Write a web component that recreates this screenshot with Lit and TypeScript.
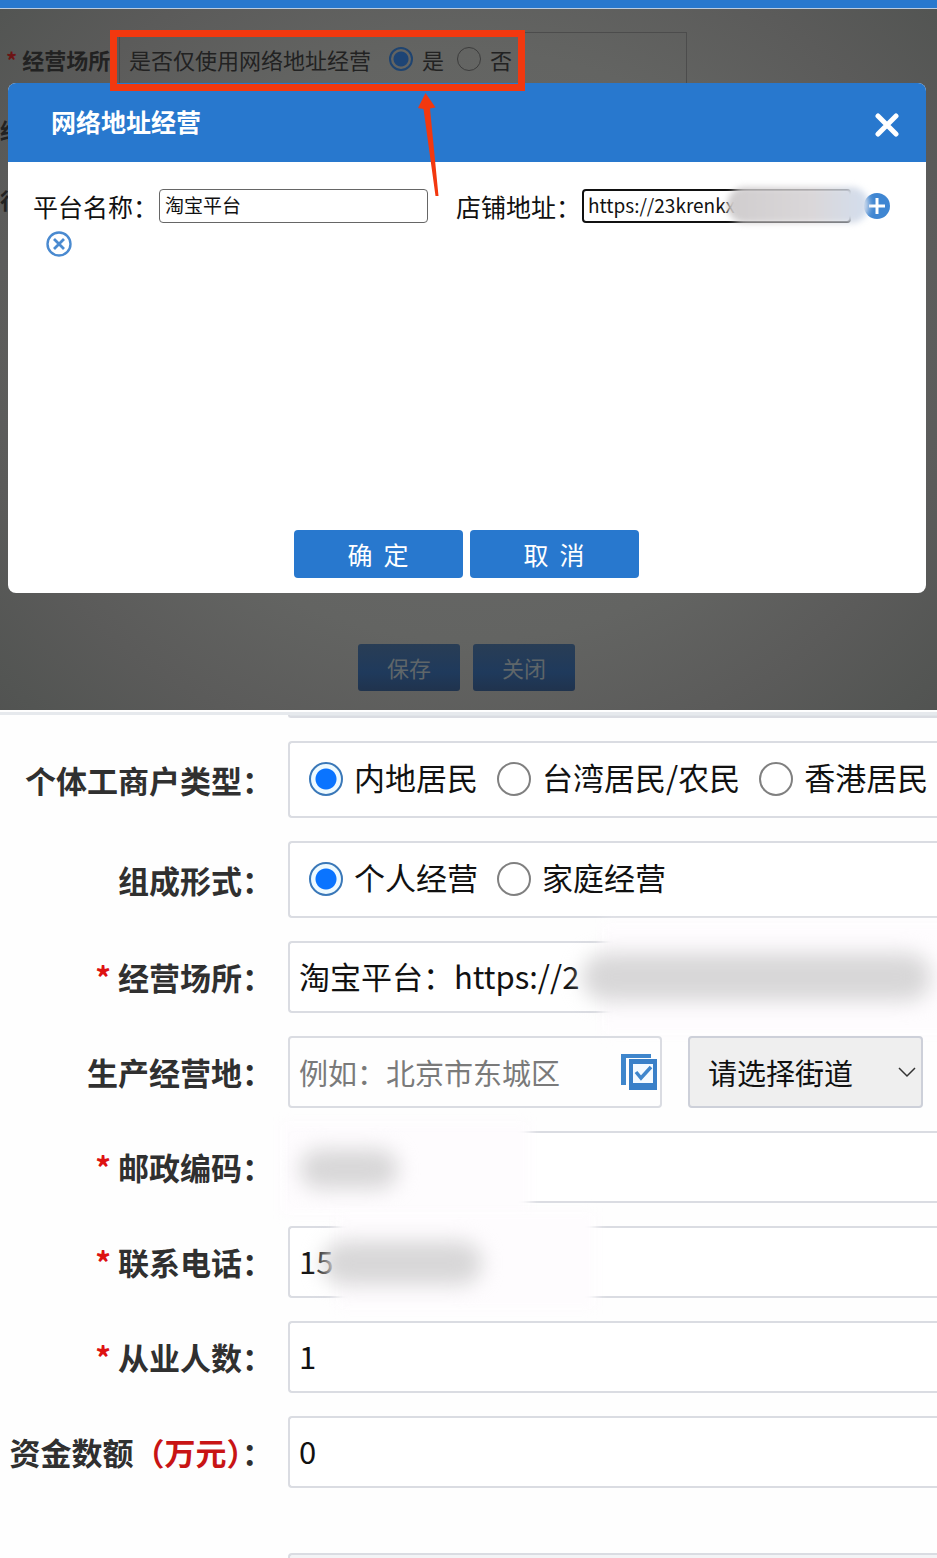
import { LitElement, html, css } from "lit";
import { customElement } from "lit/decorators.js";

const base = css`
  :host {
    display: block;
    font-family: "Noto Sans CJK SC", "Noto Sans", sans-serif;
  }
  * {
    box-sizing: border-box;
  }
  input,
  select,
  button {
    font-family: inherit;
    margin: 0;
  }
  button {
    cursor: pointer;
    border: 0;
    padding: 0;
  }
`;

@customElement("address-dialog")
class AddressDialog extends LitElement {
  static styles = [
    base,
    css`
      .dialog {
        display: flex;
        flex-direction: column;
        min-height: 510px;
        border-radius: 8px;
        overflow: hidden;
        background: #fff;
      }
      .head {
        display: flex;
        align-items: center;
        justify-content: space-between;
        height: 79px;
        padding: 0 27px 0 43px;
        background: #2878ce;
        color: #fff;
      }
      .title {
        margin: 0;
        padding-bottom: 4px;
        font-size: 25px;
        line-height: 36px;
        font-weight: 700;
      }
      .close {
        display: flex;
        background: none;
        padding-top: 4px;
      }
      .body {
        flex: 1;
        padding: 27px 24px 0 25px;
      }
      .fields {
        display: flex;
        align-items: center;
      }
      .field {
        display: flex;
        align-items: center;
        flex: 0 1 395px;
        margin-right: 28px;
        position: relative;
      }
      .field.last {
        margin-right: 13px;
      }
      .field label {
        font-size: 25px;
        line-height: 34px;
        white-space: nowrap;
        color: #111;
        padding-right: 1px;
      }
      .field input {
        flex: 1;
        min-width: 0;
        height: 34px;
        padding: 0 5px 4px;
        border: 1px solid #666;
        border-radius: 4px;
        font-size: 19px;
        color: #111;
        background: #fff;
        outline: 0;
      }
      .field.last input {
        border: 2px solid #111;
        padding: 0 4px 3px;
      }
      .icon {
        display: flex;
        background: none;
      }
      .second {
        display: flex;
        padding: 8px 0 0 13px;
      }
      .smudge {
        position: absolute;
        right: -18px;
        top: -2px;
        width: 142px;
        height: 36px;
        border-radius: 18px;
        background: linear-gradient(90deg, #d0cdce 0, #dad7d9 60%, #d3deee 100%);
        filter: blur(3px);
      }
      .actions {
        display: flex;
        justify-content: center;
        gap: 7px;
        padding: 0 2px 15px 0;
      }
      .actions button {
        width: 169px;
        height: 48px;
        border-radius: 4px;
        background: #2878ce;
        color: #fff;
        font-size: 25px;
        line-height: 36px;
      }
    `,
  ];

  render() {
    return html`
      <section class="dialog" role="dialog" aria-labelledby="title">
        <header class="head">
          <h2 class="title" id="title">网络地址经营</h2>
          <button class="close" aria-label="关闭窗口">
            <svg width="24" height="24" viewBox="0 0 24 24">
              <path d="M3 3L21 21M21 3L3 21" stroke="#fff" stroke-width="5" stroke-linecap="round" />
            </svg>
          </button>
        </header>
        <div class="body">
          <div class="fields">
            <div class="field">
              <label for="platform">平台名称：</label>
              <input id="platform" type="text" value="淘宝平台" />
            </div>
            <div class="field last">
              <label for="shop">店铺地址：</label>
              <input id="shop" type="text" value="https://23krenkx" />
              <span class="smudge" aria-hidden="true"></span>
            </div>
            <button class="icon" aria-label="添加">
              <svg width="26" height="26" viewBox="0 0 26 26">
                <circle cx="13" cy="13" r="13" fill="#3f86d2" />
                <path d="M13 5V21M5 13H21" stroke="#fff" stroke-width="3" />
              </svg>
            </button>
          </div>
          <div class="second">
            <button class="icon" aria-label="删除">
              <svg width="26" height="26" viewBox="0 0 26 26" fill="none" stroke="#4a8ad0">
                <circle cx="13" cy="13" r="11.5" stroke-width="2.4" />
                <path d="M8 8L18 18M18 8L8 18" stroke-width="2.8" />
              </svg>
            </button>
          </div>
        </div>
        <footer class="actions">
          <button>确&nbsp;&nbsp;定</button>
          <button>取&nbsp;&nbsp;消</button>
        </footer>
      </section>
    `;
  }
}

@customElement("dimmed-stage")
class DimmedStage extends LitElement {
  static styles = [
    base,
    css`
      .bar {
        height: 9px;
        background: #2878ce;
        border-bottom: 1px solid #b9cbe0;
      }
      .stage {
        display: grid;
        position: relative;
        overflow: hidden;
        background: radial-gradient(
          ellipse 62% 70% at 50% 48%,
          #6a6a6a 0,
          #636462 60%,
          #5b5b5a 85%,
          #535553 105%,
          #4d4d4d 125%
        );
      }
      .under,
      address-dialog {
        grid-area: 1 / 1;
      }
      address-dialog {
        margin: 74px 11px 117px 8px;
        position: relative;
      }
      .under {
        display: flex;
        flex-direction: column;
        padding: 23px 0 19px;
        color: #222;
        font-size: 22px;
        line-height: 34px;
      }
      .row {
        display: flex;
        height: 54px;
        align-items: center;
        margin-bottom: 16px;
      }
      .name {
        width: 119px;
        padding-left: 6px;
        white-space: nowrap;
        font-weight: 700;
      }
      .name.cut {
        padding-left: 0;
      }
      .star {
        color: #6c1414;
      }
      .choices {
        display: flex;
        align-items: center;
        width: 568px;
        height: 54px;
        padding-left: 9px;
        border: 1px solid #4c4c4c;
      }
      .choices label {
        margin-right: 13px;
      }
      .choices span {
        margin-right: 18px;
      }
      .choices input {
        appearance: none;
        width: 24px;
        height: 24px;
        margin: 0 9px 0 0;
        border: 1px solid #3c3c3c;
        border-radius: 50%;
      }
      .choices input:checked {
        border: 2px solid #1f4470;
        background: radial-gradient(circle, #1d4475 0 7px, transparent 8px);
      }
      .actions {
        display: flex;
        justify-content: center;
        gap: 13px;
        margin-top: auto;
        padding-right: 4px;
      }
      .actions button {
        width: 102px;
        height: 47px;
        padding-bottom: 2px;
        border-radius: 3px;
        background: linear-gradient(#293d55, #1f3a5c 60%, #20334d);
        color: #5f6669;
        font-size: 22px;
        line-height: 34px;
      }
      .mark {
        position: absolute;
        left: 110px;
        top: 21px;
      }
    `,
  ];

  render() {
    return html`
      <div class="bar"></div>
      <div class="stage">
        <div class="under">
          <div class="row">
            <div class="name"><span class="star">*</span> 经营场所</div>
            <div class="choices" role="radiogroup" aria-labelledby="only">
              <span id="only">是否仅使用网络地址经营</span>
              <input type="radio" name="net" id="yes" checked /><label for="yes">是</label>
              <input type="radio" name="net" id="no" /><label for="no">否</label>
            </div>
          </div>
          <div class="row"><div class="name cut">经</div></div>
          <div class="row"><div class="name cut">行</div></div>
          <div class="actions">
            <button>保存</button>
            <button>关闭</button>
          </div>
        </div>
        <address-dialog></address-dialog>
        <svg class="mark" width="416" height="170" viewBox="0 0 416 170" aria-hidden="true">
          <rect x="3.5" y="3.5" width="408" height="54" fill="none" stroke="#f2380f" stroke-width="7" />
          <path d="M315.500 63L308 78L313.500 79L325.500 166H328.500L320 78.500L325.500 77.500Z" fill="#f2380f" />
        </svg>
      </div>
    `;
  }
}

@customElement("detail-form")
class DetailForm extends LitElement {
  static styles = [
    base,
    css`
      :host {
        margin-top: 2px;
        border-top: 3px solid #e6e9ed;
        overflow: hidden;
      }
      form {
        display: grid;
        gap: 23px;
      }
      .row {
        display: grid;
        grid-template-columns: 273px minmax(0, 1fr);
        column-gap: 15px;
        align-items: center;
        position: relative;
      }
      .name {
        display: flex;
        justify-content: flex-end;
        font-size: 31px;
        line-height: 44px;
        font-weight: 700;
        color: #303030;
        white-space: nowrap;
      }
      .star {
        color: #dd1111;
        margin-right: 7px;
      }
      .unit {
        color: #c81414;
      }
      .box {
        width: 100%;
        height: 72px;
        border: 2px solid #dadce2;
        border-right: 0;
        border-radius: 4px 0 0 4px;
        background: #fff;
        color: #111;
        font-size: 31px;
        padding: 0 9px 3px;
        outline: 0;
      }
      .radios {
        display: flex;
        align-items: center;
        height: 77px;
        padding: 0 0 1px 19px;
        line-height: 44px;
        white-space: nowrap;
      }
      .radios input {
        appearance: none;
        flex: none;
        width: 34px;
        height: 34px;
        margin: 0 11px 0 0;
        border: 2px solid #808080;
        border-radius: 50%;
      }
      .radios input:checked {
        border-color: #3a78b8;
        background: radial-gradient(circle, #0a74ff 0 10px, #eefaff 11px);
      }
      .radios label {
        margin-right: 19px;
        padding-bottom: 4px;
      }
      .above {
        height: 3px;
        border-top: 0;
        border-radius: 0 0 0 4px;
        background: #e0e4e8;
        padding: 0;
      }
      .first {
        align-items: start;
      }
      .pair {
        display: flex;
        gap: 26px;
        padding-right: 14px;
      }
      .picker {
        display: flex;
        align-items: center;
        flex: 374 1 374px;
        min-width: 0;
        height: 72px;
        border: 2px solid #dadce2;
        border-radius: 4px;
        padding: 0 2px 0 9px;
      }
      .picker input {
        flex: 1;
        min-width: 0;
        border: 0;
        padding: 0;
        height: 60px;
        outline: 0;
        font-size: 29px;
        background: none;
      }
      .picker input::placeholder {
        color: #7a7a7a;
      }
      .picker button {
        display: flex;
        background: none;
      }
      .street {
        flex: 235 1 235px;
        min-width: 0;
        position: relative;
      }
      .street select {
        appearance: none;
        width: 100%;
        height: 72px;
        border: 2px solid #cdd0d9;
        border-radius: 4px;
        background: #efefef;
        color: #111;
        font-size: 29px;
        padding: 0 0 0 18px;
      }
      .street svg {
        position: absolute;
        right: 7px;
        top: 30px;
        pointer-events: none;
      }
      .next {
        margin-top: 42px;
      }
      .next .box {
        height: 6px;
        border-bottom: 0;
        border-radius: 4px 0 0 0;
        background: #f3f4f6;
      }
      .veil,
      .smudge {
        position: absolute;
        pointer-events: none;
      }
      .veil {
        background: #fefcfe;
        filter: blur(6px);
      }
      .smudge {
        border-radius: 24px;
        background: #d8d7d8;
        filter: blur(10px);
      }
      .veil.place {
        left: 602px;
        right: -20px;
        top: -18px;
        height: 112px;
      }
      .smudge.place {
        left: 582px;
        right: 6px;
        top: 12px;
        height: 48px;
      }
      .veil.post {
        left: 280px;
        width: 250px;
        top: -10px;
        height: 94px;
      }
      .smudge.post {
        left: 300px;
        width: 98px;
        top: 18px;
        height: 40px;
      }
      .veil.phone {
        left: 336px;
        width: 260px;
        top: -14px;
        height: 98px;
      }
      .smudge.phone {
        left: 322px;
        width: 160px;
        top: 15px;
        height: 44px;
      }
    `,
  ];

  private smudge(kind: string) {
    return html`<span class="veil ${kind}" aria-hidden="true"></span>
      <span class="smudge ${kind}" aria-hidden="true"></span>`;
  }

  private textRow(id: string, label: string, value: string, redacted = false) {
    return html`
      <div class="row">
        <label class="name" for=${id}><span class="star">*</span>${label}：</label>
        <input class="box" id=${id} type="text" .value=${value} />
        ${redacted ? this.smudge(id) : ""}
      </div>
    `;
  }

  private radioRow(id: string, label: string, options: string[]) {
    return html`
      <div class="row">
        <div class="name" id=${id}>${label}：</div>
        <div class="box radios" role="radiogroup" aria-labelledby=${id}>
          ${options.map(
            (text, i) => html`<input type="radio" name=${id} id=${id + i} ?checked=${i === 0} /><label
                for=${id + i}
                >${text}</label
              >`
          )}
        </div>
      </div>
    `;
  }

  render() {
    return html`
      <form>
        <div class="row first"><span></span><div class="box above"></div></div>
        ${this.radioRow("kind", "个体工商户类型", ["内地居民", "台湾居民/农民", "香港居民"])}
        ${this.radioRow("form", "组成形式", ["个人经营", "家庭经营"])}
        ${this.textRow("place", "经营场所", "淘宝平台：https://2", true)}
        <div class="row">
          <label class="name" for="area">生产经营地：</label>
          <div class="pair">
            <div class="picker">
              <input id="area" type="text" placeholder="例如：北京市东城区" />
              <button type="button" aria-label="选择地区">
                <svg width="37" height="38" viewBox="0 0 37 38">
                  <path d="M0 1H30V5H5V32H0Z" fill="#3f86cc" />
                  <path d="M8 6H36V37H8Z" fill="#3a80c8" />
                  <path d="M12 11H32V30H12Z" fill="#f4faff" />
                  <path d="M15 19L20 25L30 14" fill="none" stroke="#3f86cc" stroke-width="3.500" />
                </svg>
              </button>
            </div>
            <div class="street">
              <select aria-label="街道">
                <option>请选择街道</option>
              </select>
              <svg width="18" height="12" viewBox="0 0 18 12">
                <path d="M1 2L9 10L17 2" fill="none" stroke="#333" stroke-width="1.500" />
              </svg>
            </div>
          </div>
        </div>
        ${this.textRow("post", "邮政编码", "", true)}
        ${this.textRow("phone", "联系电话", "15", true)}
        ${this.textRow("staff", "从业人数", "1")}
        <div class="row">
          <label class="name" for="funds"><span>资金数额<span class="unit">（万元）</span>：</span></label>
          <input class="box" id="funds" type="text" value="0" />
        </div>
        <div class="row next"><span></span><div class="box"></div></div>
      </form>
    `;
  }
}

@customElement("app-root")
class AppRoot extends LitElement {
  static styles = css`
    :host {
      display: block;
      min-height: 100vh;
      background: #fefefe;
      overflow: hidden;
    }
  `;

  render() {
    return html`
      <dimmed-stage></dimmed-stage>
      <detail-form></detail-form>
    `;
  }
}
